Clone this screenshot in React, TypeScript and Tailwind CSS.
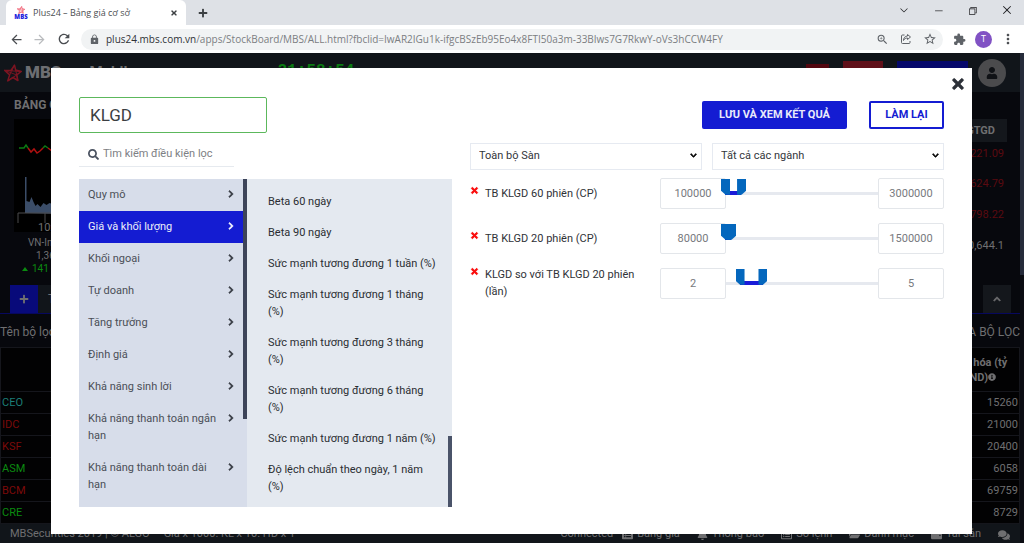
import { useState } from "react";
import {
  FaBell,
  FaChevronDown,
  FaChevronRight,
  FaChevronUp,
  FaComments,
  FaFolderOpen,
  FaInfoCircle,
  FaListAlt,
  FaPlus,
  FaRegListAlt,
  FaSearch,
  FaTimes,
  FaUser,
  FaWallet,
} from "react-icons/fa";
import {
  MdArrowBack,
  MdArrowForward,
  MdExtension,
  MdLock,
  MdMoreVert,
  MdRefresh,
  MdStarBorder,
  MdZoomIn,
} from "react-icons/md";
import { VscChevronDown, VscChromeClose, VscChromeMinimize, VscChromeRestore } from "react-icons/vsc";

const categories = [
  "Quy mô",
  "Giá và khối lượng",
  "Khối ngoại",
  "Tự doanh",
  "Tăng trưởng",
  "Định giá",
  "Khả năng sinh lời",
  "Khả năng thanh toán ngắn hạn",
  "Khả năng thanh toán dài hạn",
];

const conditions = [
  "Beta 60 ngày",
  "Beta 90 ngày",
  "Sức mạnh tương đương 1 tuần (%)",
  "Sức mạnh tương đương 1 tháng (%)",
  "Sức mạnh tương đương 3 tháng (%)",
  "Sức mạnh tương đương 6 tháng (%)",
  "Sức mạnh tương đương 1 năm (%)",
  "Độ lệch chuẩn theo ngày, 1 năm (%)",
];

const filters = [
  { label: "TB KLGD 60 phiên (CP)", min: "100000", max: "3000000", from: 0, to: 10.5 },
  { label: "TB KLGD 20 phiên (CP)", min: "80000", max: "1500000", from: 0, to: 4 },
  { label: "KLGD so với TB KLGD 20 phiên (lần)", min: "2", max: "5", from: 9.5, to: 24.5 },
];

const stocks = [
  { code: "CEO", cap: "15260", tone: "text-[#1c7f78]" },
  { code: "IDC", cap: "21000", tone: "text-[#7c0a0a]" },
  { code: "KSF", cap: "20400", tone: "text-[#7c0a0a]" },
  { code: "ASM", cap: "6058", tone: "text-[#0b8a10]" },
  { code: "BCM", cap: "69759", tone: "text-[#7c0a0a]" },
  { code: "CRE", cap: "8729", tone: "text-[#0b8a10]" },
];

function Star({ className }: { className: string }) {
  return (
    <svg viewBox="0 0 24 24" className={className} fill="none" stroke="currentColor" strokeWidth="2" strokeLinejoin="round" aria-hidden="true">
      <path d="M14 1.500 15.500 8l7.500 2-6 4.500 1.500 7.500-6.500-4L5 22.500l2.500-8L1 8.500l8 .3z" />
      <path d="M1 8.500 16.500 14.500M14 1.500 7.500 14.500M23 10 8 9M18.500 22 15.500 8M5 22.500 17 14.500" strokeWidth="1.400" />
    </svg>
  );
}

function Browser() {
  return (
    <div className="font-['Open_Sans',sans-serif] text-[#4a4d51]">
      <div className="flex h-[25px] items-start justify-between bg-[#dee1e6]">
        <div className="flex items-center">
          <div className="ml-[6px] flex h-[25px] w-[180px] items-center rounded-t-[6px] bg-white pr-2 pl-2">
            <span className="flex w-[14px] flex-col items-center">
              <Star className="size-2 text-[#ef4a60]" />
              <span className="text-[6px] leading-[6px] font-black text-[#2222dd]">MBS</span>
            </span>
            <span className="ml-[5px] flex-1 text-[9px]">Plus24 – Bảng giá cơ sở</span>
            <button aria-label="Đóng thẻ" className="text-[#3c4043]">
              <FaTimes className="size-2" />
            </button>
          </div>
          <button aria-label="Thẻ mới" className="ml-3 text-[#3c4043]">
            <FaPlus className="size-[10px]" />
          </button>
        </div>
        <div className="flex items-center gap-[23px] pt-1 pr-[11px] text-[#202124]">
          <button aria-label="Tìm thẻ"><VscChevronDown className="size-3" /></button>
          <button aria-label="Thu nhỏ"><VscChromeMinimize className="size-[11px]" /></button>
          <button aria-label="Khôi phục"><VscChromeRestore className="size-[11px]" /></button>
          <button aria-label="Đóng"><VscChromeClose className="size-3" /></button>
        </div>
      </div>
      <div className="flex h-7 items-center bg-white pr-2 pl-[9px]">
        <button aria-label="Quay lại"><MdArrowBack className="size-[15px]" /></button>
        <button aria-label="Tiến" className="ml-2 text-[#b9bbbe]"><MdArrowForward className="size-[15px]" /></button>
        <button aria-label="Tải lại" className="ml-[9px]"><MdRefresh className="size-4" /></button>
        <div className="ml-[9px] flex h-[21px] flex-1 items-center rounded-full bg-[#f1f3f4] pr-[6px] pl-2">
          <MdLock className="size-[11px] text-[#5f6368]" />
          <span className="ml-[6px] flex-1 text-[10px] whitespace-nowrap text-[#7b7e82]">
            <span className="text-[#2f3236]">plus24.mbs.com.vn</span>
            /apps/StockBoard/MBS/ALL.html?fbclid=IwAR2IGu1k-ifgcBSzEb95Eo4x8FTI50a3m-33BIws7G7RkwY-oVs3hCCW4FY
          </span>
          <div className="flex items-center gap-[11px] text-[#5f6368]">
            <button aria-label="Thu phóng"><MdZoomIn className="size-[13px]" /></button>
            <button aria-label="Chia sẻ">
              <svg viewBox="0 0 24 24" className="size-3" fill="none" stroke="currentColor" strokeWidth="2" strokeLinejoin="round">
                <path d="M9 4H5a2 2 0 0 0-2 2v13a2 2 0 0 0 2 2h13a2 2 0 0 0 2-2v-3" />
                <path d="M15 3l6 5-6 5v-3c-4 0-6 1-8 5 0-5 3-9 8-9z" />
              </svg>
            </button>
            <button aria-label="Dấu trang"><MdStarBorder className="size-[14px]" /></button>
          </div>
        </div>
        <button aria-label="Tiện ích" className="ml-[10px] text-[#5f6368]"><MdExtension className="size-[13px]" /></button>
        <button className="ml-[9px] size-[17px] rounded-full bg-[#8152c4] text-[9px] text-white">T</button>
        <button aria-label="Trình đơn" className="ml-2"><MdMoreVert className="size-4" /></button>
      </div>
    </div>
  );
}

function Board() {
  return (
    <div className="flex min-h-0 flex-1 bg-[#07080d] text-[11px] text-[#6f6f71]">
      <div className="flex min-w-0 flex-1 flex-col">
        <header className="flex h-[39px] items-center justify-between bg-[#11151a] pr-[14px] pl-1">
          <div className="flex items-center">
            <Star className="size-[18px] text-[#7d1522]" />
            <span className="ml-[3px] text-[17px] font-black text-[#6d6e72]">MBS</span>
            <span className="ml-7 text-[15px] font-bold">Mobile</span>
            <span className="ml-[142px] pb-1 font-['Liberation_Mono',monospace] text-[16px] leading-5 font-bold text-[#0b7a12]">21:58:54</span>
          </div>
          <div className="flex items-center gap-[10px]">
            <div className="flex items-start gap-[14px]">
              <span className="mt-[3px] h-5 w-[23px] bg-[#52060f]" />
              <span className="h-5 w-10 bg-[#5f1019]" />
              <span className="h-5 w-[71px] bg-[#06086b]" />
            </div>
            <span className="flex size-7 items-center justify-center rounded-full bg-[#4b4b4d] text-[#101216]">
              <FaUser className="size-3" />
            </span>
          </div>
        </header>

        <section className="flex h-[193px] justify-between">
          <div className="w-[90px] pl-[14px]">
            <h2 className="py-[5px] text-[12px] leading-[17px] font-bold whitespace-nowrap">BẢNG GIÁ</h2>
            <svg viewBox="0 0 76 113" className="block h-[113px] w-[76px] overflow-visible bg-black" aria-hidden="true">
              <path d="M5 29h5l2-3 2 3M29 29l2-2 3 2" fill="none" stroke="#0b7a12" strokeWidth="1.500" />
              <path d="M14 29l3 4 3-3 3 4 3-2 3-3M34 29l4 3 4 0" fill="none" stroke="#b01010" strokeWidth="1.500" />
              <path d="M11 94V58h1.500v24l3 1 2-5 2 5 2 4 2-2 3 3 3-4 3 2 3-2 3 1h9v10z" fill="#3b4d68" />
              <path d="M4 104V94h45M31 94v10" fill="none" stroke="#4a4a4c" />
            </svg>
            <div className="ml-[14px] text-[10px] leading-[13px] whitespace-nowrap">
              <p className="-mt-3 pl-[10px] text-[11px] leading-4">10:00</p>
              <p>VN-Index</p>
              <p className="pl-2">1,369.21</p>
              <p className="-ml-5 flex items-center gap-1 pl-[14px] text-[#0b8a10]">
                <svg viewBox="0 0 6 4" className="h-1 w-[6px]" fill="currentColor" aria-hidden="true"><path d="M0 4 3 0l3 4z" /></svg>
                141
              </p>
            </div>
          </div>
          <div className="flex w-[80px] flex-col items-end pt-[27px] pr-[13px] text-right">
            <div className="h-[23px] w-full bg-[#14171c] pr-3 leading-[23px] font-bold">GTGD</div>
            <p className="h-[23px] pr-[3px] leading-[23px] text-[#5a0a10]">17,221.09</p>
            <p className="h-[38px] pr-[3px] leading-[38px] text-[#5a0a10]">12,624.79</p>
            <p className="h-6 pr-[3px] leading-6 text-[#5a0a10]">10,798.22</p>
            <p className="pr-[3px] leading-[38px]">10,644.1</p>
          </div>
        </section>

        <div className="flex h-[29px] items-end justify-between border-b border-[#07085e] pr-[9px] pl-[10px]">
          <div className="flex">
            <span className="flex size-7 items-center justify-center bg-[#080a7a]"><FaPlus className="size-[10px]" /></span>
            <span className="h-7 w-20 bg-[#11151a] pl-[10px] text-[12px] leading-7">Tất cả</span>
          </div>
          <span className="flex size-7 items-center justify-center bg-[#14171c]">
            <FaChevronUp className="size-2" stroke="currentColor" strokeWidth="40" />
          </span>
        </div>

        <div className="flex h-[33px] items-center justify-between pt-[2px] text-[12px] whitespace-nowrap">
          <span>Tên bộ lọc</span>
          <span>XÓA BỘ LỌC</span>
        </div>

        <table className="w-full border-collapse bg-[#020203]">
          <thead>
            <tr className="h-11 border border-[#15161c]">
              <th aria-label="Mã" />
              <th className="w-20 p-0 text-center leading-[15px] font-bold whitespace-nowrap">
                Vốn hóa (tỷ
                <br />
                VND)
                <FaInfoCircle className="inline size-2 align-baseline" />
              </th>
            </tr>
          </thead>
          <tbody>
            {stocks.map((s) => (
              <tr key={s.code} className="h-[22px] border border-[#15161c] leading-[15px]">
                <td className={`p-0 pl-[1px] ${s.tone}`}>{s.code}</td>
                <td className="p-0 pr-[1px] text-right">{s.cap}</td>
              </tr>
            ))}
          </tbody>
        </table>

        <footer className="flex flex-1 items-center justify-between bg-[#11151a] pt-[2px] pr-[10px] pl-[10px] whitespace-nowrap">
          <div className="flex gap-[14px]">
            <span>MBSecurities 2019 | © ALGO</span>
            <span>Giá x 1000. KL x 10. HĐ x 1</span>
          </div>
          <div className="flex items-center gap-[17px]">
            <span className="-mr-2">Connected</span>
            <span className="flex items-center gap-1"><FaListAlt />Bảng giá</span>
            <span className="flex items-center gap-1"><FaBell />Thông báo</span>
            <span className="flex items-center gap-1"><FaRegListAlt />Sổ lệnh</span>
            <span className="flex items-center gap-1"><FaFolderOpen />Danh mục</span>
            <span className="flex items-center gap-1"><FaWallet />Tài sản</span>
            <FaComments className="size-3" />
          </div>
        </footer>
      </div>
      <div className="w-1 bg-[#0b0c12]">
        <div className="h-[222px] bg-[#262b3a]" />
      </div>
    </div>
  );
}

const thumb =
  "pointer-events-none absolute top-0 left-0 m-0 h-4 w-full appearance-none bg-transparent [&::-webkit-slider-thumb]:pointer-events-auto [&::-webkit-slider-thumb]:h-4 [&::-webkit-slider-thumb]:w-[9px] [&::-webkit-slider-thumb]:appearance-none [&::-webkit-slider-thumb]:bg-[#0467bd]";

function RangeSlider({ label, from, to }: { label: string; from: number; to: number }) {
  const [low, setLow] = useState(from);
  const [high, setHigh] = useState(to);
  return (
    <div className="flex flex-1 items-center self-stretch">
      <div className="relative h-[3px] w-full bg-[#e6e9ef]">
        <div className="absolute -inset-x-[5px] -top-[13px] h-4">
          <div className="absolute inset-x-1 bottom-0 h-1">
            <div className="absolute h-1 bg-[#1a1cd8]" style={{ left: `${low}%`, width: `${high - low}%` }} />
          </div>
          <input
            type="range"
            aria-label={`${label} từ`}
            min={0}
            max={100}
            step={0.5}
            value={low}
            onChange={(e) => setLow(Math.min(Number(e.target.value), high))}
            className={`${thumb} [&::-webkit-slider-thumb]:[clip-path:polygon(0_0,100%_0,100%_100%,50%_100%,0_75%)]`}
          />
          <input
            type="range"
            aria-label={`${label} đến`}
            min={0}
            max={100}
            step={0.5}
            value={high}
            onChange={(e) => setHigh(Math.max(Number(e.target.value), low))}
            className={`${thumb} [&::-webkit-slider-thumb]:[clip-path:polygon(0_0,100%_0,100%_75%,50%_100%,0_100%)]`}
          />
        </div>
      </div>
    </div>
  );
}

function SelectBox({ label, value }: { label: string; value: string }) {
  return (
    <div className="relative flex-1">
      <select
        aria-label={label}
        className="h-[27px] w-full appearance-none rounded-none border border-[#e6eaf1] bg-white pl-2 text-[11px] text-[#33363b]"
      >
        <option>{value}</option>
      </select>
      <FaChevronDown
        className="pointer-events-none absolute top-[10px] right-[5px] size-[7px] text-black"
        stroke="currentColor"
        strokeWidth="50"
      />
    </div>
  );
}

const numberBox = "h-[31px] w-[66px] rounded-[2px] border border-[#e3e6ea] bg-white text-center text-[11px] text-[#77797d]";

function FilterDialog() {
  const [name, setName] = useState("KLGD");
  const [active, setActive] = useState(1);
  return (
    <div
      role="dialog"
      aria-label="Bộ lọc cổ phiếu"
      className="relative flex w-full gap-[18px] bg-white px-7 pt-[29px] pb-[27px] text-[#2f3237]"
    >
      <button aria-label="Đóng hộp thoại" className="absolute top-2 right-[6px] text-[#2c3038]">
        <FaTimes className="size-4" stroke="currentColor" strokeWidth="20" />
      </button>

      <div className="flex w-[373px] flex-col">
        <input
          aria-label="Tên bộ lọc"
          value={name}
          onChange={(e) => setName(e.target.value)}
          className="h-9 w-[188px] rounded-[2px] border border-[#5cb85c] pl-[10px] text-[17px] text-[#3b3e42]"
        />
        <label className="mt-[10px] flex h-6 w-[155px] items-center gap-1 border-b border-[#e6eaef] pl-[9px]">
          <FaSearch className="size-[11px] shrink-0 text-[#4a5260]" />
          <input
            type="search"
            aria-label="Tìm kiếm điều kiện lọc"
            placeholder="Tìm kiếm điều kiện lọc"
            className="w-full min-w-0 text-[11px] placeholder:text-[#7d8084]"
          />
        </label>

        <div className="mt-3 flex min-h-0 flex-1 leading-[17px]">
          <ul className="min-w-0 flex-1 basis-0 overflow-hidden bg-[#d7ddea]">
            {categories.map((c, i) => (
              <li key={c}>
                <button
                  onClick={() => setActive(i)}
                  className={`flex w-full items-start justify-between pt-[7px] pr-2 pb-2 pl-[9px] text-left text-[11px] ${
                    i === active ? "bg-[#141cd2] text-[#eceef8]" : "text-[#4b4f57]"
                  }`}
                >
                  <span className="w-[134px]">{c}</span>
                  <FaChevronRight
                    className={`mt-1 size-2 ${i === active ? "text-white" : "text-[#30343c]"}`}
                    stroke="currentColor"
                    strokeWidth="40"
                  />
                </button>
              </li>
            ))}
          </ul>
          <div className="w-1 bg-[#d7ddea]">
            <div className="h-[240px] bg-[#3d4459]" />
          </div>
          <div className="relative w-[205px] bg-[#e4e9f0]">
            <ul className="flex flex-col gap-[14px] pt-[14px] pr-3 pl-[21px] text-[11px] text-[#2a2d32]">
              {conditions.map((c) => (
                <li key={c}>{c}</li>
              ))}
            </ul>
            <div className="absolute right-0 bottom-0 h-[71px] w-1 bg-[#4a5369]" />
          </div>
        </div>
      </div>

      <div className="min-w-0 flex-1">
        <div className="flex justify-end gap-[22px] pt-1 text-[11px] font-bold">
          <button className="h-7 w-[145px] rounded-[2px] bg-[#141cd2] text-[#e8eafa]">LƯU VÀ XEM KẾT QUẢ</button>
          <button className="h-7 w-[75px] rounded-[2px] border-2 border-[#141cd2] bg-white text-[#141cd2]">LÀM LẠI</button>
        </div>
        <div className="mt-[13px] flex gap-[10px]">
          <SelectBox label="Sàn" value="Toàn bộ Sàn" />
          <SelectBox label="Ngành" value="Tất cả các ngành" />
        </div>
        <div className="mt-2 flex flex-col gap-[14px]">
          {filters.map((f) => (
            <div key={f.label} className="flex h-[31px] items-center">
              <div className="flex w-[190px] items-start gap-[6px]">
                <button aria-label={`Xóa ${f.label}`} className="pt-[1px] text-[#fa0d0d]">
                  <FaTimes className="size-[9px]" stroke="currentColor" strokeWidth="50" />
                </button>
                <span className="flex-1 pr-3 text-[11px] leading-[17px]">{f.label}</span>
              </div>
              <input aria-label={`${f.label} tối thiểu`} defaultValue={f.min} className={numberBox} />
              <RangeSlider label={f.label} from={f.from} to={f.to} />
              <input aria-label={`${f.label} tối đa`} defaultValue={f.max} className={numberBox} />
            </div>
          ))}
        </div>
      </div>
    </div>
  );
}

export default function App() {
  return (
    <div className="flex min-h-screen flex-col font-[Roboto,sans-serif]">
      <Browser />
      <main className="relative flex flex-1 flex-col overflow-hidden">
        <Board />
        <div className="absolute inset-0 flex pt-[15px] pr-[52px] pb-[9px] pl-[51px]">
          <FilterDialog />
        </div>
      </main>
    </div>
  );
}
